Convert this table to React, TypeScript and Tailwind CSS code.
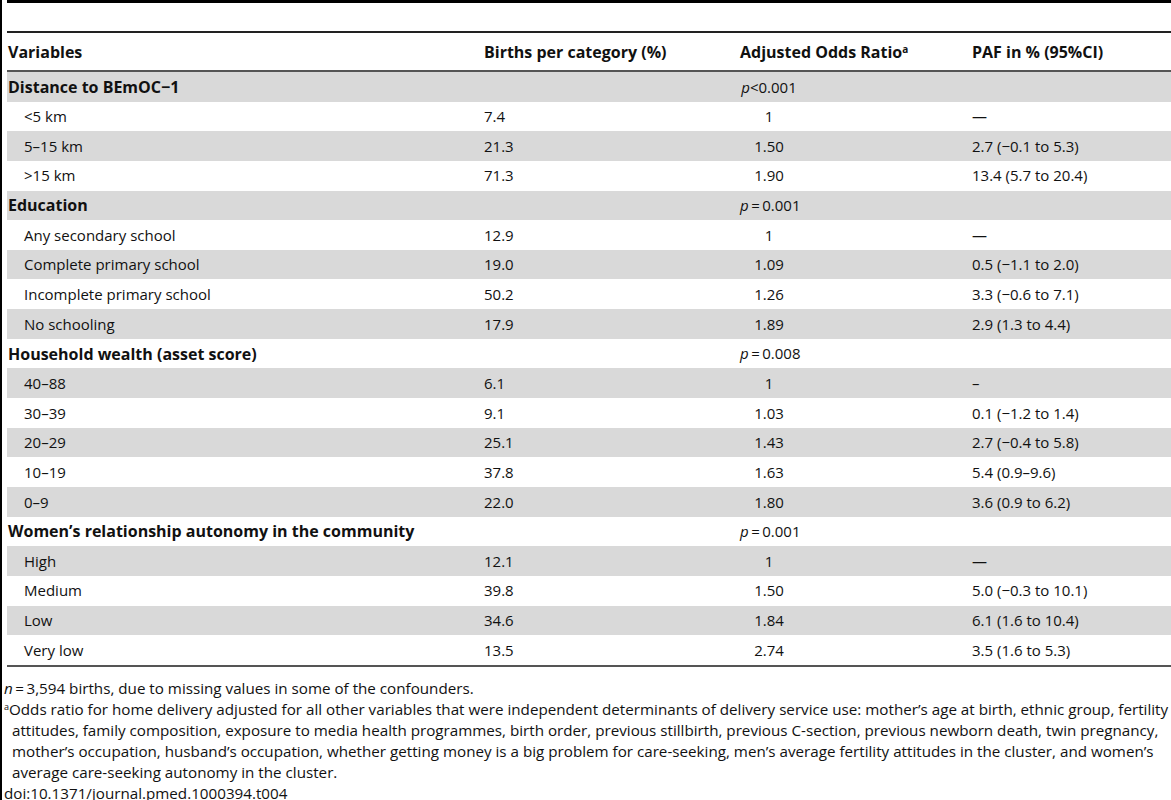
import type { ReactNode } from "react";

type Row = {
  label: ReactNode;
  births?: string;
  ratio?: ReactNode;
  paf?: string;
  section?: boolean;
};

const P = ({ children }: { children: ReactNode }) => (
  <span>
    <i>p</i>
    {children}
  </span>
);

const rows: Row[] = [
  { label: "Distance to BEmOC\u22121", ratio: <P>{"<0.001"}</P>, section: true },
  { label: "<5 km", births: "7.4", ratio: "1", paf: "\u2014" },
  { label: "5\u201315 km", births: "21.3", ratio: "1.50", paf: "2.7 (\u22120.1 to 5.3)" },
  { label: ">15 km", births: "71.3", ratio: "1.90", paf: "13.4 (5.7 to 20.4)" },
  { label: "Education", ratio: <P>{"\u2009=\u20090.001"}</P>, section: true },
  { label: "Any secondary school", births: "12.9", ratio: "1", paf: "\u2014" },
  { label: "Complete primary school", births: "19.0", ratio: "1.09", paf: "0.5 (\u22121.1 to 2.0)" },
  { label: "Incomplete primary school", births: "50.2", ratio: "1.26", paf: "3.3 (\u22120.6 to 7.1)" },
  { label: "No schooling", births: "17.9", ratio: "1.89", paf: "2.9 (1.3 to 4.4)" },
  { label: "Household wealth (asset score)", ratio: <P>{"\u2009=\u20090.008"}</P>, section: true },
  { label: "40\u201388", births: "6.1", ratio: "1", paf: "\u2013" },
  { label: "30\u201339", births: "9.1", ratio: "1.03", paf: "0.1 (\u22121.2 to 1.4)" },
  { label: "20\u201329", births: "25.1", ratio: "1.43", paf: "2.7 (\u22120.4 to 5.8)" },
  { label: "10\u201319", births: "37.8", ratio: "1.63", paf: "5.4 (0.9\u20139.6)" },
  { label: "0\u20139", births: "22.0", ratio: "1.80", paf: "3.6 (0.9 to 6.2)" },
  { label: "Women\u2019s relationship autonomy in the community", ratio: <P>{"\u2009=\u20090.001"}</P>, section: true },
  { label: "High", births: "12.1", ratio: "1", paf: "\u2014" },
  { label: "Medium", births: "39.8", ratio: "1.50", paf: "5.0 (\u22120.3 to 10.1)" },
  { label: "Low", births: "34.6", ratio: "1.84", paf: "6.1 (1.6 to 10.4)" },
  { label: "Very low", births: "13.5", ratio: "2.74", paf: "3.5 (1.6 to 5.3)" },
];

const cols = "grid grid-cols-[477px_256px_232px_1fr] items-center";

export default function App() {
  return (
    <main
      className="h-[800px] w-[1171px] overflow-hidden border-l-2 border-black bg-white pl-[5px] text-[15px] text-[#111]"
      style={{ fontFamily: '"Open Sans", "Liberation Sans", sans-serif' }}
    >
      {/* Top rules */}
      <div className="h-[3px] bg-black" />
      <div className="h-[28px]" />
      <div className="h-[2px] bg-[#222]" />

      {/* Header */}
      <div className={`${cols} h-[37px] text-[16px] font-bold`}>
        <div className="pl-px">Variables</div>
        <div>Births per category (%)</div>
        <div className="whitespace-nowrap">
          Adjusted Odds Ratio<sup className="text-[10px]">a</sup>
        </div>
        <div>PAF in % (95%CI)</div>
      </div>
      <div className="h-[2px] bg-[#555]" />

      {/* Body */}
      <div>
        {rows.map((r, i) => (
          <div
            key={i}
            className={`${cols} h-[29.65px] ${i % 2 === 0 ? "bg-[#d9d9d9]" : "bg-white"}`}
          >
            <div className={r.section ? "pl-px text-[16px] font-bold" : "pl-[17px]"}>{r.label}</div>
            <div>{r.births}</div>
            <div className="w-[58px] whitespace-nowrap text-center">{r.ratio}</div>
            <div className="whitespace-nowrap">{r.paf}</div>
          </div>
        ))}
      </div>
      <div className="h-[2px] bg-[#555]" />

      {/* Footnotes */}
      <div className="-ml-[3px] mt-[11px] whitespace-nowrap text-[15.2px] leading-[21px]">
        <p>
          <i>n</i>&thinsp;=&thinsp;3,594 births, due to missing values in some of the confounders.
        </p>
        <div className="pl-[8px]">
          <p className="-indent-[8px]">
            <sup className="text-[9px]">a</sup>Odds ratio for home delivery adjusted for all other variables that were independent determinants of delivery service use: mother’s age at birth, ethnic group, fertility
          </p>
          <p>
            attitudes, family composition, exposure to media health programmes, birth order, previous stillbirth, previous C-section, previous newborn death, twin pregnancy,
          </p>
          <p>
            mother’s occupation, husband’s occupation, whether getting money is a big problem for care-seeking, men’s average fertility attitudes in the cluster, and women’s
          </p>
          <p>average care-seeking autonomy in the cluster.</p>
        </div>
        <p>doi:10.1371/journal.pmed.1000394.t004</p>
      </div>
    </main>
  );
}
